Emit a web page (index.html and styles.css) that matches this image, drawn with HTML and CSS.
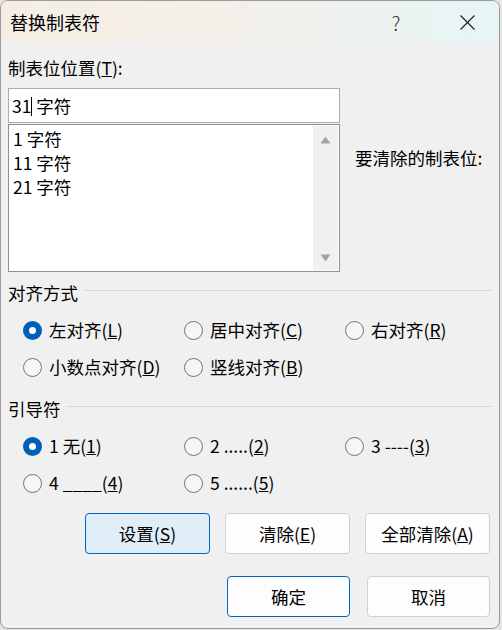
FILE: index.html
```html
<!DOCTYPE html>
<html lang="zh-CN">
<head>
  <meta charset="UTF-8">
  <title>替换制表符</title>
  <link rel="stylesheet" href="styles.css">
</head>
<body>

  <div class="window">
    <div class="titlebar">
      <span class="title">替换制表符</span>
      <span class="help">?</span>
      <span class="close">
        <svg width="15" height="15" viewBox="0 0 15 15">
          <path d="M0.5 0.5 L14.5 14.5 M14.5 0.5 L0.5 14.5" stroke="#1b1b1b" stroke-width="1.1" fill="none"/>
        </svg>
      </span>
    </div>

    <div class="content">
      <div class="field-label">制表位位置(<u>T</u>):</div>

      <div class="tab-row">
        <div class="tab-col">
          <div class="input">31<span class="caret"></span> 字符</div>
          <div class="listbox">
            <div class="items">
              <div>1 字符</div>
              <div>11 字符</div>
              <div>21 字符</div>
            </div>
            <div class="scrollbar">
              <svg width="11" height="8" viewBox="0 0 11 8"><polygon points="5.5,0.5 10.5,7.5 0.5,7.5" fill="#a3a3a3"/></svg>
              <svg width="11" height="8" viewBox="0 0 11 8"><polygon points="0.5,0.5 10.5,0.5 5.5,7.5" fill="#a3a3a3"/></svg>
            </div>
          </div>
        </div>
        <div class="clear-label">要清除的制表位:</div>
      </div>

      <div class="group">
        <div class="group-title"><span>对齐方式</span></div>
        <div class="options">
          <label class="radio checked"><span class="dot"></span><span>左对齐(<u>L</u>)</span></label>
          <label class="radio"><span class="dot"></span><span>居中对齐(<u>C</u>)</span></label>
          <label class="radio"><span class="dot"></span><span>右对齐(<u>R</u>)</span></label>
          <label class="radio"><span class="dot"></span><span>小数点对齐(<u>D</u>)</span></label>
          <label class="radio"><span class="dot"></span><span>竖线对齐(<u>B</u>)</span></label>
        </div>
      </div>

      <div class="group leaders">
        <div class="group-title"><span>引导符</span></div>
        <div class="options">
          <label class="radio checked"><span class="dot"></span><span>1 无(<u>1</u>)</span></label>
          <label class="radio"><span class="dot"></span><span>2 .....(<u>2</u>)</span></label>
          <label class="radio"><span class="dot"></span><span>3 ----(<u>3</u>)</span></label>
          <label class="radio"><span class="dot"></span><span>4 ____(<u>4</u>)</span></label>
          <label class="radio"><span class="dot"></span><span>5 ......(<u>5</u>)</span></label>
        </div>
      </div>

      <div class="buttons">
        <button class="active">设置(<u>S</u>)</button>
        <button>清除(<u>E</u>)</button>
        <button>全部清除(<u>A</u>)</button>
      </div>

      <div class="buttons dialog-buttons">
        <button class="default">确定</button>
        <button>取消</button>
      </div>
    </div>
  </div>

</body>
</html>
```

FILE: styles.css
```css
* {
  box-sizing: border-box;
}

body {
  margin: 0;
  background-color: #e4e4e4;
  font-family: 'Noto Sans CJK SC', sans-serif;
  color: #000;
}

.window {
  width: 500px;
  height: 629px;
  border: 1px solid #9a9a9a;
  border-radius: 8px;
  overflow: hidden;
  background-color: #f0f0f0;
}

.titlebar {
  height: 43px;
  display: flex;
  align-items: center;
  padding: 0 12px 0 9px;
  background: linear-gradient(90deg, #f6eee6 0%, #f3efe9 45%, #e7f5f6 100%);
}

.title {
  flex: 1;
  font-size: 18px;
  line-height: 43px;
}

.help {
  width: 40px;
  text-align: center;
  font-size: 20px;
  font-weight: 300;
  color: #333;
  line-height: 43px;
  margin-right: 31px;
}

.close {
  width: 40px;
  display: flex;
  justify-content: center;
  align-items: center;
}

.content {
  padding: 0 7px;
  font-size: 17.5px;
  line-height: 24px;
}

.field-label {
  padding-top: 12px;
}

.tab-row {
  display: flex;
  margin-top: 8px;
}

.tab-col {
  width: 332px;
}

.input {
  height: 35px;
  border: 1px solid #adadad;
  background-color: #fff;
  padding-left: 3px;
  line-height: 33px;
}

.caret {
  display: inline-block;
  width: 1px;
  height: 19px;
  background-color: #000;
  vertical-align: middle;
  margin-top: -3px;
}

.listbox {
  margin-top: 1px;
  height: 148px;
  border: 1px solid #8f8f8f;
  background-color: #fff;
  display: flex;
}

.items {
  flex: 1;
  padding: 2px 0 0 4px;
}

.scrollbar {
  width: 25px;
  margin: 1px 1px 1px 0;
  background-color: #f0f0f0;
  display: flex;
  flex-direction: column;
  justify-content: space-between;
  align-items: center;
  padding: 10px 0 8px;
}

.scrollbar svg {
  display: block;
}

.clear-label {
  padding: 58px 0 0 15px;
}

.group {
  margin-top: 9px;
}

.group.leaders {
  margin-top: 15px;
}

.group-title {
  display: flex;
  align-items: center;
}

.group-title::after {
  content: "";
  flex: 1;
  height: 1px;
  background-color: #dadada;
  margin: 0 0 5px 5px;
}

.options {
  display: grid;
  grid-template-columns: 161px 161px 1fr;
  grid-auto-rows: 30px;
  row-gap: 7px;
  padding: 10px 0 0 15px;
}

.radio {
  display: flex;
  align-items: center;
  gap: 7px;
  white-space: nowrap;
}

.dot {
  width: 19px;
  height: 19px;
  border-radius: 50%;
  border: 1px solid #747474;
  background-color: #f6f6f6;
  flex-shrink: 0;
}

.radio.checked .dot {
  border: 6px solid #005fb8;
  background-color: #fff;
}

.buttons {
  display: flex;
  justify-content: flex-end;
  gap: 15px;
  margin-top: 15px;
  padding-right: 2px;
}

.dialog-buttons {
  margin-top: 22px;
  gap: 17px;
}

button {
  width: 125px;
  height: 41px;
  font-family: inherit;
  font-size: 17.5px;
  color: #000;
  background-color: #fdfdfd;
  border: 1px solid #d0d0d0;
  border-radius: 4px;
  padding: 0;
}

.dialog-buttons button {
  width: 123px;
}

button.active {
  background-color: #e0eef9;
  border-color: #0067c0;
}

button.default {
  border-color: #0067c0;
}
```
